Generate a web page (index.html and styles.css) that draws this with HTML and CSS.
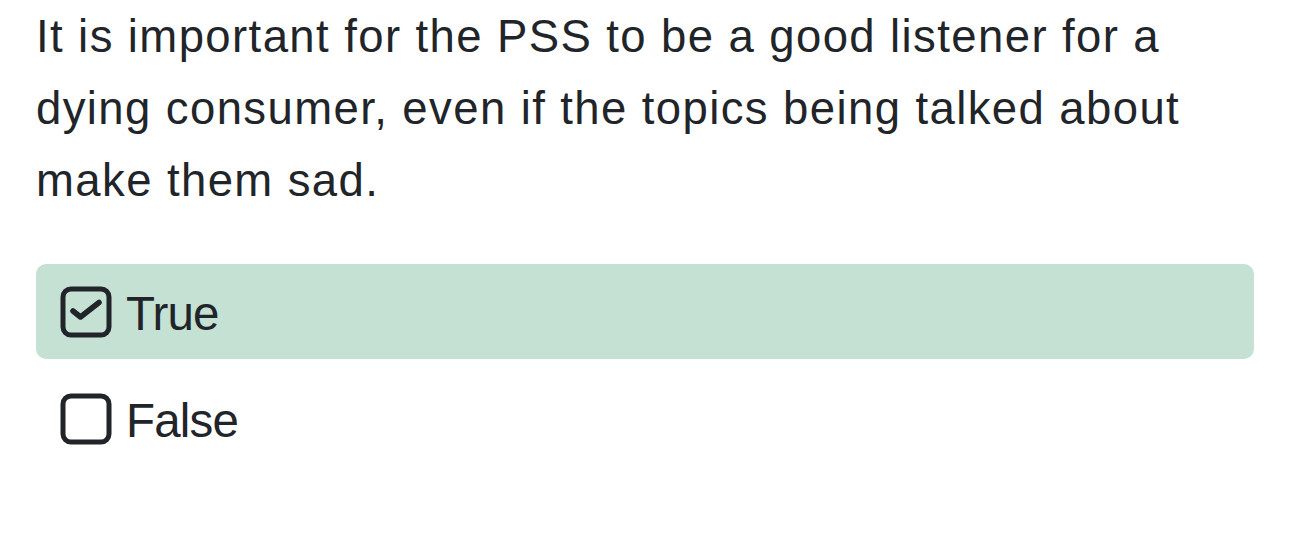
FILE: index.html
```html
<!DOCTYPE html>
<html>
<head>
<meta charset="utf-8">
<link rel="stylesheet" href="styles.css">
</head>
<body>
<div class="question">
  <p class="prompt">It is important for the PSS to be a good listener for a dying consumer, even if the topics being talked about make them sad.</p>
  <div class="options">
    <div class="option selected">
      <svg class="box" width="52" height="52" viewBox="0 0 52 52">
        <rect x="3" y="3" width="46" height="46" rx="8" fill="none" stroke="#212529" stroke-width="5"/>
        <path d="M13 25 L20.5 31 L39 16.5" fill="none" stroke="#212529" stroke-width="5.5" stroke-linecap="round" stroke-linejoin="round"/>
      </svg>
      <span class="label">True</span>
    </div>
    <div class="option">
      <svg class="box" width="52" height="52" viewBox="0 0 52 52">
        <rect x="3" y="3" width="46" height="46" rx="8" fill="none" stroke="#212529" stroke-width="5"/>
      </svg>
      <span class="label">False</span>
    </div>
  </div>
</div>
</body>
</html>
```

FILE: styles.css
```css
html, body {
  margin: 0;
  padding: 0;
  background: #ffffff;
}
body {
  font-family: "Liberation Sans", Arial, Helvetica, sans-serif;
  color: #212529;
}
.question {
  padding: 0 36px;
}
.prompt {
  margin: 0;
  font-size: 45.5px;
  line-height: 72px;
  letter-spacing: 1.4px;
  padding-top: 1px;
}
.options {
  margin-top: 47px;
  display: flex;
  flex-direction: column;
  gap: 12px;
}
.option {
  display: flex;
  align-items: center;
  height: 95px;
  padding-left: 24px;
  border-radius: 10px;
  gap: 14px;
}
.option.selected {
  background: #c4e1d4;
}
.box {
  flex: none;
  display: block;
}
.label {
  font-size: 47.5px;
  line-height: 52px;
  letter-spacing: -0.8px;
  padding-top: 4px;
}
```
